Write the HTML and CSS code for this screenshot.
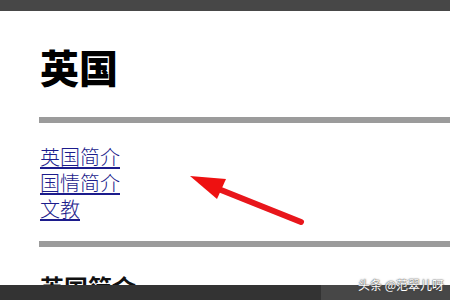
FILE: index.html
```html
<!DOCTYPE html>
<html lang="zh">
<head>
<meta charset="utf-8">
<link rel="stylesheet" href="styles.css">
</head>
<body>
<div class="topbar"></div>
<main class="page">
  <h1 class="title">英国</h1>
  <div class="rule"></div>
  <nav class="links">
    <a href="#a">英国简介</a>
    <a href="#b">国情简介</a>
    <a href="#c">文教</a>
  </nav>
  <div class="rule rule2"></div>
  <h2 class="sub">英国简介</h2>
</main>
<svg class="arrow" width="450" height="300" viewBox="0 0 450 300">
  <line x1="216" y1="188" x2="301" y2="222" stroke="#e8161b" stroke-width="6" stroke-linecap="round"/>
  <polygon points="190,176 226,179 217,199" fill="#ee1111"/>
</svg>
<div class="bottombar">
  <div class="bb-left"></div>
  <div class="bb-right"></div>
</div>
<div class="watermark">头条 @范翠儿呀</div>
</body>
</html>
```
FILE: styles.css
```css
html, body {
  margin: 0;
  padding: 0;
  background: #fff;
  overflow: hidden;
  height: 300px;
}
body {
  font-family: "Noto Sans CJK SC", "Noto Sans", sans-serif;
  position: relative;
}
.topbar {
  height: 11px;
  background: #474747;
}
.page {
  padding-left: 40px;
}
.title {
  margin: 35px 0 0;
  font-size: 39px;
  line-height: 40px;
  font-weight: 900;
  color: #000;
}
.rule {
  margin: 31px 0 0 -1px;
  height: 6px;
  background: #9b9b9b;
}
.rule2 {
  margin-top: 19px;
}
.links {
  margin-top: 21px;
  display: flex;
  flex-direction: column;
  align-items: flex-start;
  font-size: 20px;
  line-height: 26px;
}
.links a {
  color: #1c1c8c;
  text-decoration: underline;
  text-underline-offset: 2px;
  font-weight: 300;
}
.sub {
  margin: 26px 0 0;
  font-size: 24px;
  line-height: 28px;
  font-weight: 700;
  color: #111;
}
.arrow {
  position: absolute;
  left: 0;
  top: 0;
}
.bottombar {
  position: absolute;
  left: 0;
  right: 0;
  top: 285px;
  height: 15px;
  display: flex;
}
.bb-left {
  width: 321px;
  background: #333;
}
.bb-right {
  flex: 1;
  background: #474747;
}
.watermark {
  position: absolute;
  left: 358px;
  top: 277px;
  font-size: 12px;
  line-height: 16px;
  white-space: nowrap;
  color: #fff;
  text-shadow: 0 0 1px #333, 0 0 2px #555;
}
```
